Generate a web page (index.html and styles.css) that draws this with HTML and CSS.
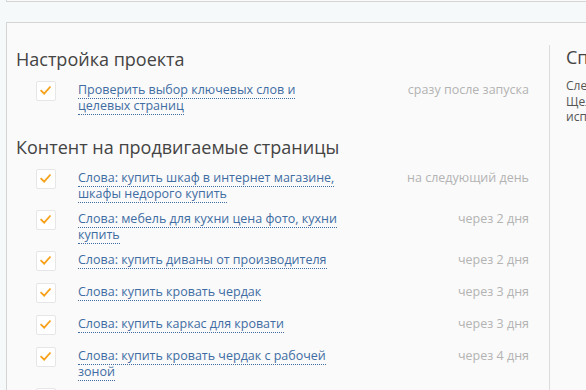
FILE: index.html
```html
<!DOCTYPE html>
<html lang="ru">
<head>
    <meta charset="UTF-8">
    <meta name="viewport" content="width=device-width, initial-scale=1.0">
    <title>Задачи проекта</title>
    <link rel="stylesheet" href="styles.css">
</head>
<body>
    <div class="top-bar"></div>

    <div class="panel">
        <div class="tasks">

            <div class="section">
                <h2 class="section-title">Настройка проекта</h2>
                <div class="items">
                    <div class="item">
                        <span class="check"><svg viewBox="0 0 20 20"><polyline points="4,9 8,13 15,5"/></svg></span>
                        <div class="text"><a href="#">Проверить выбор ключевых слов и целевых страниц</a></div>
                        <div class="when">сразу после запуска</div>
                    </div>
                </div>
            </div>

            <div class="section">
                <h2 class="section-title">Контент на продвигаемые страницы</h2>
                <div class="items">
                    <div class="item">
                        <span class="check"><svg viewBox="0 0 20 20"><polyline points="4,9 8,13 15,5"/></svg></span>
                        <div class="text"><a href="#">Слова: купить шкаф в интернет магазине, шкафы недорого купить</a></div>
                        <div class="when">на следующий день</div>
                    </div>
                    <div class="item">
                        <span class="check"><svg viewBox="0 0 20 20"><polyline points="4,9 8,13 15,5"/></svg></span>
                        <div class="text"><a href="#">Слова: мебель для кухни цена фото, кухни купить</a></div>
                        <div class="when">через 2 дня</div>
                    </div>
                    <div class="item">
                        <span class="check"><svg viewBox="0 0 20 20"><polyline points="4,9 8,13 15,5"/></svg></span>
                        <div class="text"><a href="#">Слова: купить диваны от производителя</a></div>
                        <div class="when">через 2 дня</div>
                    </div>
                    <div class="item">
                        <span class="check"><svg viewBox="0 0 20 20"><polyline points="4,9 8,13 15,5"/></svg></span>
                        <div class="text"><a href="#">Слова: купить кровать чердак</a></div>
                        <div class="when">через 3 дня</div>
                    </div>
                    <div class="item">
                        <span class="check"><svg viewBox="0 0 20 20"><polyline points="4,9 8,13 15,5"/></svg></span>
                        <div class="text"><a href="#">Слова: купить каркас для кровати</a></div>
                        <div class="when">через 3 дня</div>
                    </div>
                    <div class="item">
                        <span class="check"><svg viewBox="0 0 20 20"><polyline points="4,9 8,13 15,5"/></svg></span>
                        <div class="text"><a href="#">Слова: купить кровать чердак с рабочей зоной</a></div>
                        <div class="when">через 4 дня</div>
                    </div>
                    <div class="item">
                        <span class="check"><svg viewBox="0 0 20 20"><polyline points="4,9 8,13 15,5"/></svg></span>
                        <div class="text"><a href="#">Слова: купить детскую кровать</a></div>
                        <div class="when">через 4 дня</div>
                    </div>
                </div>
            </div>

        </div>

        <div class="help">
            <h2 class="help-title">Справка</h2>
            <p class="help-text">Следующие задачи появятся здесь<br>Щелкните по задаче, чтобы<br>исполнить её</p>
        </div>
    </div>
</body>
</html>
```

FILE: styles.css
```css
html, body {
    margin: 0;
    overflow: hidden;
}
body {
    background-color: #f5f9fa;
    font-family: "Open Sans", "Noto Sans", sans-serif;
    color: #444;
}

.top-bar {
    height: 1px;
    margin-left: 6px;
    width: 700px;
    background-color: #fafafa;
    border-left: 1px solid #d4d4d4;
    border-bottom: 1px solid #d4d4d4;
}

.panel {
    display: flex;
    width: 800px;
    min-height: 420px;
    margin: 20px 0 0 6px;
    background-color: #fafafa;
    border: 1px solid #d4d4d4;
}

.tasks {
    width: 513px;
    margin-top: 22px;
    padding: 2px 20px 0 9px;
    border-right: 1px solid #dcdcdc;
}

.section + .section {
    margin-top: 21px;
}
.section-title {
    margin: 0 0 11px;
    font-size: 18px;
    line-height: 24px;
    font-weight: normal;
    color: #444;
}

.items {
    display: flex;
    flex-direction: column;
    gap: 9px;
}
.item {
    display: flex;
    align-items: flex-start;
    min-height: 23px;
    padding-left: 20px;
    font-size: 12.5px;
    line-height: 16px;
}

.check {
    box-sizing: border-box;
    width: 20px;
    height: 20px;
    margin-top: -1px;
    flex-shrink: 0;
    background-color: #fff;
    border: 1px solid #e6e6e6;
    border-radius: 2px;
}
.check svg {
    display: block;
    width: 18px;
    height: 18px;
    fill: none;
    stroke: #f7a11a;
    stroke-width: 2;
}

.text {
    width: 262px;
    margin-left: 22px;
}
.text a {
    color: #3f6da3;
    text-decoration: none;
    border-bottom: 1px dotted #3f6da3;
}

.when {
    margin-left: auto;
    text-align: right;
    color: #b3b3b3;
    white-space: nowrap;
}

.help {
    padding: 22px 0 0 16px;
}
.help-title {
    margin: 0 0 9px;
    font-size: 18px;
    line-height: 24px;
    font-weight: normal;
    color: #444;
}
.help-text {
    margin: 0;
    font-size: 12px;
    line-height: 15.5px;
    color: #555;
}
```
